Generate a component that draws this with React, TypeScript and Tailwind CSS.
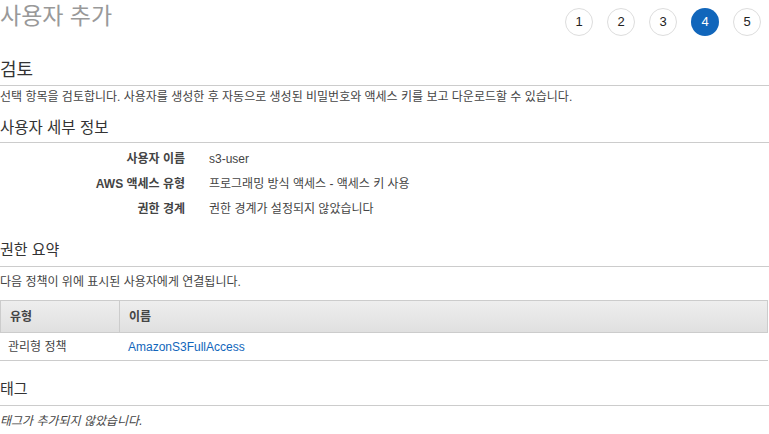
import React from "react";

const font = { fontFamily: '"Liberation Sans", "Noto Sans CJK KR", sans-serif' };

function Step({ n, active }: { n: number; active?: boolean }) {
  return (
    <div
      className={
        active
          ? "w-7 h-7 rounded-full bg-[#1166bb] text-white flex items-center justify-center text-[13px]"
          : "w-7 h-7 rounded-full border border-[#dddddd] bg-white text-[#222] flex items-center justify-center text-[13px]"
      }
    >
      {n}
    </div>
  );
}

export default function App() {
  return (
    <div className="w-[769px] h-[434px] overflow-hidden bg-white text-[#444]" style={font}>
      <div className="flex justify-between h-[58px]">
        <div className="text-[23px] leading-[30px] text-[#999] pt-[1px]">사용자 추가</div>
        <div className="flex gap-[14px] pr-[8px] pt-[8px] h-fit">
          <Step n={1} />
          <Step n={2} />
          <Step n={3} />
          <Step n={4} active />
          <Step n={5} />
        </div>
      </div>

      <div className="text-[18px] leading-[24px] pb-[3px] border-b border-[#cccccc] text-[#333]">검토</div>
      <div className="text-[12px] leading-[16px] mt-[3px]">
        선택 항목을 검토합니다. 사용자를 생성한 후 자동으로 생성된 비밀번호와 액세스 키를 보고 다운로드할 수 있습니다.
      </div>

      <div className="text-[15.5px] leading-[20px] pb-[4px] border-b border-[#cccccc] mt-[13px] text-[#333]">
        사용자 세부 정보
      </div>
      <div className="pt-[3px] text-[12px]">
        {[
          ["사용자 이름", "s3-user"],
          ["AWS 액세스 유형", "프로그래밍 방식 액세스 - 액세스 키 사용"],
          ["권한 경계", "권한 경계가 설정되지 않았습니다"],
        ].map(([k, v]) => (
          <div key={k} className="flex items-center h-[25px]">
            <div className="w-[185px] shrink-0 text-right font-bold">{k}</div>
            <div className="pl-[24px]">{v}</div>
          </div>
        ))}
      </div>

      <div className="text-[15px] leading-[20px] pb-[6px] border-b border-[#cccccc] mt-[19px] text-[#333]">
        권한 요약
      </div>
      <div className="text-[12px] leading-[16px] mt-[7px]">다음 정책이 위에 표시된 사용자에게 연결됩니다.</div>

      <div className="mt-[10px] w-[768px] text-[12px]">
        <div className="flex h-[33px] border border-[#cccccc] bg-gradient-to-b from-[#eeeeee] to-[#e0e0e0] font-bold">
          <div className="w-[119px] border-r border-[#cccccc] flex items-center pl-[9px]">유형</div>
          <div className="flex items-center pl-[9px]">이름</div>
        </div>
        <div className="flex h-[28px] border-b border-[#cccccc] items-center">
          <div className="w-[120px] pl-[8px]">관리형 정책</div>
          <div className="pl-[8px] text-[#1166bb]">AmazonS3FullAccess</div>
        </div>
      </div>

      <div className="text-[15px] leading-[20px] pb-[6px] border-b border-[#cccccc] mt-[18px] text-[#333]">태그</div>
      <div className="text-[12px] leading-[16px] mt-[7px] italic">태그가 추가되지 않았습니다.</div>
    </div>
  );
}
